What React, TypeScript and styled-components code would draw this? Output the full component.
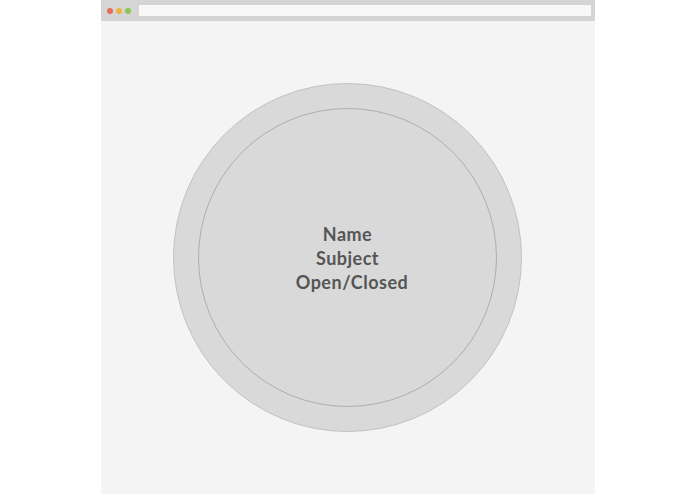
import React from "react";
import styled, { createGlobalStyle } from "styled-components";

const GlobalStyle = createGlobalStyle`
  html, body {
    margin: 0;
    padding: 0;
    background: #ffffff;
  }
  body {
    font-family: Lato, "Open Sans", sans-serif;
  }
`;

const Page = styled.div`
  display: flex;
  justify-content: center;
  height: 494px;
`;

const BrowserFrame = styled.div`
  width: 494px;
  height: 494px;
  display: flex;
  flex-direction: column;
  background: #f4f4f4;
`;

const TopBar = styled.div`
  height: 21px;
  flex-shrink: 0;
  display: flex;
  align-items: center;
  gap: 3px;
  padding: 0 4px 0 6px;
  box-sizing: border-box;
  background: #d5d5d5;
`;

const Dot = styled.span<{ $color: string }>`
  width: 6px;
  height: 6px;
  border-radius: 50%;
  background: ${(p) => p.$color};
`;

const AddressBar = styled.div`
  flex: 1;
  height: 11px;
  margin-left: 5px;
  background: #f8f8f8;
`;

const Content = styled.div`
  flex: 1;
  display: flex;
  align-items: center;
  justify-content: center;
`;

const OuterCircle = styled.div`
  width: 349px;
  height: 349px;
  box-sizing: border-box;
  border-radius: 50%;
  background: #d9d9d9;
  border: 1px solid #c2c2c2;
  display: flex;
  align-items: center;
  justify-content: center;
`;

const InnerCircle = styled.div`
  width: 299px;
  height: 299px;
  box-sizing: border-box;
  border-radius: 50%;
  border: 1px solid #adadad;
  display: flex;
  flex-direction: column;
  align-items: center;
  justify-content: center;
`;

const Label = styled.div<{ $indent?: number }>`
  font-family: Lato, "Open Sans", sans-serif;
  font-weight: 700;
  font-size: 18px;
  line-height: 24px;
  letter-spacing: 0.5px;
  color: #555555;
  padding-left: ${(p) => p.$indent ?? 0}px;
`;

export default function App() {
  return (
    <>
      <GlobalStyle />
      <Page>
        <BrowserFrame>
          <TopBar>
            <Dot $color="#e86b5a" />
            <Dot $color="#e9b43f" />
            <Dot $color="#8dc74d" />
            <AddressBar />
          </TopBar>
          <Content>
            <OuterCircle>
              <InnerCircle>
                <Label>Name</Label>
                <Label>Subject</Label>
                <Label $indent={9}>Open/Closed</Label>
              </InnerCircle>
            </OuterCircle>
          </Content>
        </BrowserFrame>
      </Page>
    </>
  );
}
